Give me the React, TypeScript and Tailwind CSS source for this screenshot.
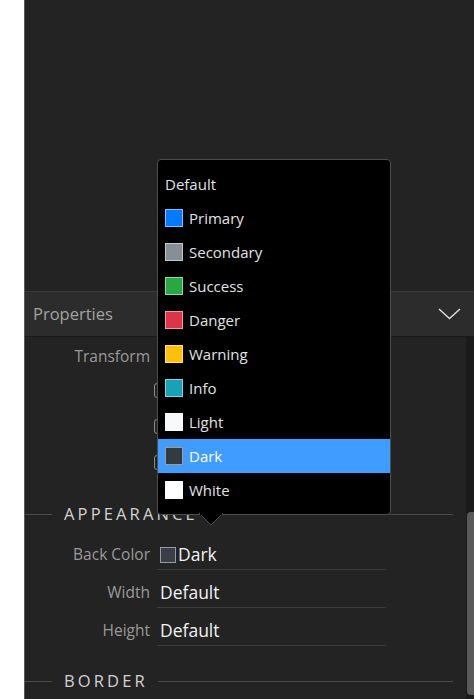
import React from 'react';

type Option = { name: string; color?: string };

const options: Option[] = [
  { name: 'Default' },
  { name: 'Primary', color: '#007bff' },
  { name: 'Secondary', color: '#868e96' },
  { name: 'Success', color: '#28a745' },
  { name: 'Danger', color: '#dc3545' },
  { name: 'Warning', color: '#ffc107' },
  { name: 'Info', color: '#17a2b8' },
  { name: 'Light', color: '#f8f9fa' },
  { name: 'Dark', color: '#343a40' },
  { name: 'White', color: '#ffffff' },
];

function SectionTitle({ title, className = '' }: { title: string; className?: string }) {
  return (
    <div className={`flex h-[24px] items-center pr-[13px] ${className}`}>
      <div className="w-[27px] border-t border-[#4a4a4a]" />
      <span className="ml-[12px] text-[16.5px] tracking-[0.19em] text-[#d2d2d2] leading-none">
        {title}
      </span>
      <div className="ml-[10px] flex-1 border-t border-[#4a4a4a]" />
    </div>
  );
}

function FieldRow({ label, children, className = '' }: { label: string; children: React.ReactNode; className?: string }) {
  return (
    <div className={`flex h-[30px] items-center ${className}`}>
      <div className="w-[125px] text-right text-[15.5px] text-[#9a9a9a]">{label}</div>
      <div className="ml-[7px] flex h-full w-[229px] items-center border-b border-[#3c3c3c] pl-[3px] text-[17.5px] text-[#f2f2f2]">
        {children}
      </div>
    </div>
  );
}

function CheckRow() {
  return (
    <div className="flex h-[36px] items-center pl-[129px]">
      <div className="h-[15px] w-[14px] rounded-[3px] border border-[#8a8a8a]" />
    </div>
  );
}

export default function App() {
  return (
    <div
      className="flex h-[699px] w-[474px] overflow-hidden bg-white"
      style={{ fontFamily: '"Open Sans", "Noto Sans", sans-serif' }}
    >
      <div className="w-[24px] shrink-0 bg-white" />
      <section className="relative flex flex-1 flex-col border-l border-[#5a5a5a] bg-[#232323]">
        {/* empty canvas above */}
        <div className="h-[291px] shrink-0" />

        {/* properties header */}
        <div className="flex h-[46px] shrink-0 items-center justify-between border-t border-[#3a3a3a] border-b border-b-[#1a1a1a] bg-[#2c2c2c] pl-[8px] pr-[13px]">
          <h2 className="text-[16.5px] text-[#a3a3a3]">Properties</h2>
          <svg width="23" height="12" viewBox="0 0 23 12" fill="none">
            <path d="M1 1 L11.5 10.5 L22 1" stroke="#dcdcdc" strokeWidth="1.5" />
          </svg>
        </div>

        {/* body */}
        <div className="flex flex-1">
          <div className="flex flex-1 flex-col pt-[8px]">
            <div className="flex h-[24px] items-center">
              <div className="w-[125px] text-right text-[15.5px] text-[#9a9a9a]">Transform</div>
            </div>
            <div className="mt-[3px]">
              <CheckRow />
              <CheckRow />
              <CheckRow />
            </div>

            <SectionTitle title="APPEARANCE" className="mt-[22px]" />

            <FieldRow label="Back Color" className="mt-[14px]">
              <span className="mr-[2px] h-[16px] w-[16px] border border-[#9a9a9a] bg-[#3a3f47]" />
              Dark
            </FieldRow>
            <FieldRow label="Width" className="mt-[8px]">Default</FieldRow>
            <FieldRow label="Height" className="mt-[8px]">Default</FieldRow>

            <SectionTitle title="BORDER" className="mt-[23px]" />
          </div>
          {/* scrollbar */}
          <div className="flex w-[8px] flex-col bg-[#1a1a1a] pl-[1px]">
            <div className="h-[175px]" />
            <div className="h-[183px] rounded-l-[4px] bg-[#5a5a5a]" />
          </div>
        </div>

        {/* colour dropdown */}
        <div className="absolute left-[132px] top-[159px] z-10 w-[234px] rounded-[4px] border border-[#4e4e4e] bg-black pt-[7px] pb-[7px]">
          {options.map((o) => (
            <div
              key={o.name}
              className={`flex h-[34px] items-center pl-[7px] text-[15px] text-[#e2e2e2] ${
                o.name === 'Dark' ? 'bg-[#409cff] text-white' : ''
              }`}
            >
              {o.color && (
                <span
                  className="mr-[6px] h-[18px] w-[18px] border border-white/50"
                  style={{ backgroundColor: o.color }}
                />
              )}
              {o.name}
            </div>
          ))}
        </div>
        <svg
          className="absolute left-[174px] top-[513px] z-20"
          width="24"
          height="13"
          viewBox="0 0 24 13"
        >
          <polygon points="0,0 24,0 12,12" fill="#000" />
          <path d="M0 0 L12 12 L24 0" stroke="#4e4e4e" strokeWidth="1" fill="none" />
          <rect x="1" y="0" width="22" height="2" fill="#000" />
        </svg>
      </section>
    </div>
  );
}
